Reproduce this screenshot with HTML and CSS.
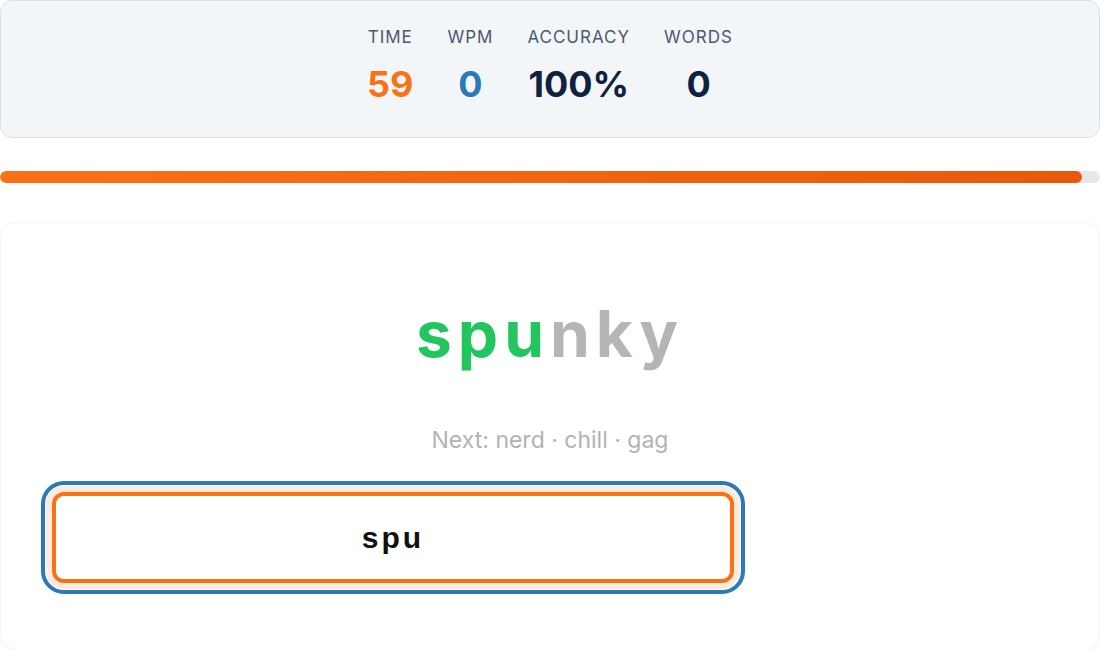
FILE: index.html
```html
<!DOCTYPE html>
<html lang="en">
<head>
  <meta charset="UTF-8" />
  <meta name="viewport" content="width=device-width, initial-scale=1.0"/>
  <title>Typing Test</title>
  <link rel="stylesheet" href="styles.css">
</head>
<body>

  <!-- Stats -->
  <div class="stats-panel">
    <div class="stat">
      <div class="stat-label">Time</div>
      <div class="stat-value time">59</div>
    </div>
    <div class="stat">
      <div class="stat-label">WPM</div>
      <div class="stat-value wpm">0</div>
    </div>
    <div class="stat">
      <div class="stat-label">Accuracy</div>
      <div class="stat-value">100%</div>
    </div>
    <div class="stat">
      <div class="stat-label">Words</div>
      <div class="stat-value">0</div>
    </div>
  </div>

  <div class="progress-track">
    <div class="progress-fill" style="width: 98.33%"></div>
  </div>

  <!-- Typing area -->
  <div class="typing-card">
    <div class="current-word"><span class="typed">spu</span><span class="rest">nky</span></div>
    <div class="next-words">Next: nerd · chill · gag</div>
    <input type="text" class="word-input" id="wordInput" value="spu" autocomplete="off">
  </div>

</body>
</html>
```

FILE: styles.css
```css
body {
  margin: 0;
  font-family: Inter, 'Noto Sans', sans-serif;
  background-color: #ffffff;
}

.stats-panel {
  display: flex;
  justify-content: center;
  gap: 34px;
  background: #f3f6f8;
  border: 1px solid #d8e1e8;
  border-radius: 12px;
  padding: 26px 0 30px;
}

.stat {
  text-align: center;
}

.stat-label {
  font-size: 17px;
  line-height: 1.2;
  letter-spacing: 1px;
  text-transform: uppercase;
  color: #4a5a70;
}

.stat-value {
  margin-top: 16px;
  font-size: 36px;
  line-height: 1.2;
  font-weight: 700;
  color: #10203f;
}

.stat-value.time {
  color: #f97316;
}

.stat-value.wpm {
  color: #2a7ab8;
}

.progress-track {
  margin-top: 33px;
  height: 12px;
  background: #e8e8e8;
  border-radius: 6px;
  overflow: hidden;
}

.progress-fill {
  height: 100%;
  background: linear-gradient(90deg, #f97316, #e8590c);
  border-radius: 6px;
}

.typing-card {
  margin-top: 39px;
  background: white;
  border: 1px solid #f4f4f4;
  border-radius: 16px;
  box-shadow: 0 2px 10px rgba(0,0,0,0.03);
  padding: 72px 52px 66px;
}

.current-word {
  text-align: center;
  font-size: 64px;
  line-height: 77px;
  font-weight: 700;
  letter-spacing: 6px;
}

.current-word .typed {
  color: #22c55e;
}

.current-word .rest {
  color: #b5b5b5;
}

.next-words {
  margin-top: 55px;
  text-align: center;
  font-size: 23px;
  line-height: 1.2;
  color: #b3b3b3;
}

.word-input {
  display: block;
  box-sizing: border-box;
  margin-top: 38px;
  margin-left: -1px;
  width: 682px;
  height: 91px;
  border: 4px solid #f97316;
  border-radius: 12px;
  box-shadow: 0 0 0 6px rgba(249,115,22,0.14);
  outline: 4px solid #2a7ab8;
  outline-offset: 7px;
  font-family: 'Liberation Sans', Arial, sans-serif;
  font-size: 30px;
  font-weight: 700;
  letter-spacing: 3px;
  text-align: center;
  color: #111;
  background: white;
}
```
